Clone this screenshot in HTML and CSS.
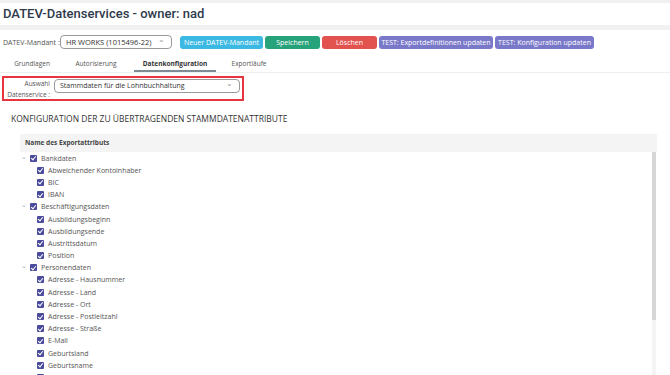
FILE: index.html
```html
<!DOCTYPE html>
<html lang="de">
<head>
  <meta charset="UTF-8">
  <title>DATEV-Datenservices</title>
  <link rel="stylesheet" href="styles.css">
</head>
<body>
  <div class="page-head">
    <h1>DATEV-Datenservices - owner: nad</h1>
  </div>

  <div class="main">
    <!-- Mandant und Aktionen -->
    <div class="toolbar">
      <span class="tb-label">DATEV-Mandant :</span>
      <div class="select mandant">HR WORKS (1015496-22)<span class="chev">&#8964;</span></div>
      <button class="btn cyan">Neuer DATEV-Mandant</button>
      <button class="btn green">Speichern</button>
      <button class="btn red">Löschen</button>
      <button class="btn purple">TEST: Exportdefinitionen updaten</button>
      <button class="btn purple">TEST: Konfiguration updaten</button>
    </div>

    <!-- Tabs -->
    <div class="tabs">
      <div class="tab">Grundlagen</div>
      <div class="tab">Autorisierung</div>
      <div class="tab active">Datenkonfiguration</div>
      <div class="tab">Exportläufe</div>
    </div>

    <!-- Auswahl -->
    <div class="service-box">
      <div class="service-label">Auswahl<br>Datenservice :</div>
      <div class="select service">Stammdaten für die Lohnbuchhaltung<span class="chev">&#8964;</span></div>
    </div>

    <h2>KONFIGURATION DER ZU ÜBERTRAGENDEN STAMMDATENATTRIBUTE</h2>

    <div class="table">
      <div class="thead">Name des Exportattributs</div>
      <div class="tbody">
        <div class="tree">
          <div class="node group"><span class="arrow">&#8964;</span><span class="cb"></span>Bankdaten</div>
          <div class="node"><span class="cb"></span>Abweichender Kontoinhaber</div>
          <div class="node"><span class="cb"></span>BIC</div>
          <div class="node"><span class="cb"></span>IBAN</div>
          <div class="node group"><span class="arrow">&#8964;</span><span class="cb"></span>Beschäftigungsdaten</div>
          <div class="node"><span class="cb"></span>Ausbildungsbeginn</div>
          <div class="node"><span class="cb"></span>Ausbildungsende</div>
          <div class="node"><span class="cb"></span>Austrittsdatum</div>
          <div class="node"><span class="cb"></span>Position</div>
          <div class="node group"><span class="arrow">&#8964;</span><span class="cb"></span>Personendaten</div>
          <div class="node"><span class="cb"></span>Adresse - Hausnummer</div>
          <div class="node"><span class="cb"></span>Adresse - Land</div>
          <div class="node"><span class="cb"></span>Adresse - Ort</div>
          <div class="node"><span class="cb"></span>Adresse - Postleitzahl</div>
          <div class="node"><span class="cb"></span>Adresse - Straße</div>
          <div class="node"><span class="cb"></span>E-Mail</div>
          <div class="node"><span class="cb"></span>Geburtsland</div>
          <div class="node"><span class="cb"></span>Geburtsname</div>
          <div class="node"><span class="cb"></span></div>
        </div>
        <div class="scroll"><div class="thumb"></div></div>
      </div>
    </div>
  </div>
</body>
</html>
```

FILE: styles.css
```css
body {
  margin: 0;
  background-color: #f1f1f1;
  font-family: "Open Sans", Arial, sans-serif;
  color: #444;
  height: 375px;
  overflow: hidden;
}
.page-head {
  background-color: #fff;
  margin-top: 3px;
  height: 22px;
  padding-left: 3px;
}
h1 {
  margin: 0;
  font-family: Roboto, Arial, sans-serif;
  font-size: 13px;
  font-weight: 500;
  line-height: 22px;
  color: #2e3a4c;
}
.main {
  background-color: #fff;
  margin-top: 5px;
  height: 345px;
}
.toolbar {
  display: flex;
  align-items: center;
  padding: 5px 0 0 3px;
  height: 14px;
}
.tb-label {
  font-size: 7px;
  color: #555;
  width: 57px;
}
.select {
  position: relative;
  box-sizing: border-box;
  height: 14px;
  border: 1px solid #999;
  border-radius: 4px;
  font-size: 7.5px;
  line-height: 12px;
  padding-left: 5px;
  color: #333;
}
.chev {
  position: absolute;
  right: 6px;
  top: -3px;
  font-size: 8px;
  color: #999;
}
.mandant {
  width: 112px;
  margin-right: 8px;
}
.btn {
  height: 13px;
  border: none;
  border-radius: 3px;
  color: #fff;
  font-family: "Open Sans", Arial, sans-serif;
  font-size: 7px;
  padding: 0;
  margin-right: 2px;
}
.cyan { background-color: #3bb9e2; width: 83px; }
.green { background-color: #27a37b; width: 55px; }
.red { background-color: #e2524f; width: 55px; }
.purple { background-color: #7a79c9; }
.btn.purple:nth-of-type(4) { width: 114px; }
.btn.purple:nth-of-type(5) { width: 99px; }
.tabs {
  display: flex;
  margin-top: 10px;
  padding-left: 8px;
  border-bottom: 1px solid #eee;
  height: 13px;
}
.tab {
  font-size: 6.5px;
  color: #555;
  text-align: center;
  line-height: 10px;
}
.tab:nth-child(1) { width: 48px; }
.tab:nth-child(2) { width: 76px; margin-left: 2px; }
.tab:nth-child(3) { width: 82px; }
.tab:nth-child(4) { width: 66px; }
.tab.active {
  font-weight: 700;
  color: #333;
  border-bottom: 2px solid #7e8a94;
}
.service-box {
  display: flex;
  align-items: center;
  width: 242px;
  height: 25px;
  margin: 3px 0 0 2px;
  box-sizing: border-box;
  border: 2px solid #e8343e;
}
.service-label {
  width: 46px;
  text-align: right;
  font-size: 6.5px;
  line-height: 11px;
  color: #555;
  margin-right: 4px;
}
.service {
  width: 186px;
  margin-top: -6px;
  font-size: 7px;
}
h2 {
  margin: 12px 0 0 11px;
  font-size: 8.5px;
  font-weight: 400;
  color: #333;
  line-height: 11px;
}
.table {
  margin: 10px 0 0 20px;
  width: 637px;
}
.thead {
  background-color: #f4f4f4;
  height: 18px;
  line-height: 18px;
  padding-left: 5px;
  font-size: 6.5px;
  font-weight: 700;
  color: #444;
}
.tbody {
  display: flex;
  justify-content: space-between;
}
.node {
  display: flex;
  align-items: center;
  height: 12.2px;
  font-size: 7px;
  color: #555;
  padding-left: 17px;
}
.node.group {
  padding-left: 0;
}
.arrow {
  width: 9px;
  font-size: 7px;
  color: #aaa;
  margin-top: -4px;
  padding-left: 1px;
}
.cb {
  width: 7px;
  height: 7px;
  border-radius: 1px;
  background-color: #4a4b9d;
  margin-right: 4px;
  position: relative;
}
.cb::after {
  content: "";
  position: absolute;
  left: 2px;
  top: 0.5px;
  width: 2px;
  height: 4px;
  border: solid #fff;
  border-width: 0 1px 1px 0;
  transform: rotate(40deg);
}
.scroll {
  width: 4px;
  margin-right: 1px;
  height: 230px;
  background-color: #f4f4f4;
}
.thumb {
  height: 168px;
  background-color: #d6d6d6;
}
```
